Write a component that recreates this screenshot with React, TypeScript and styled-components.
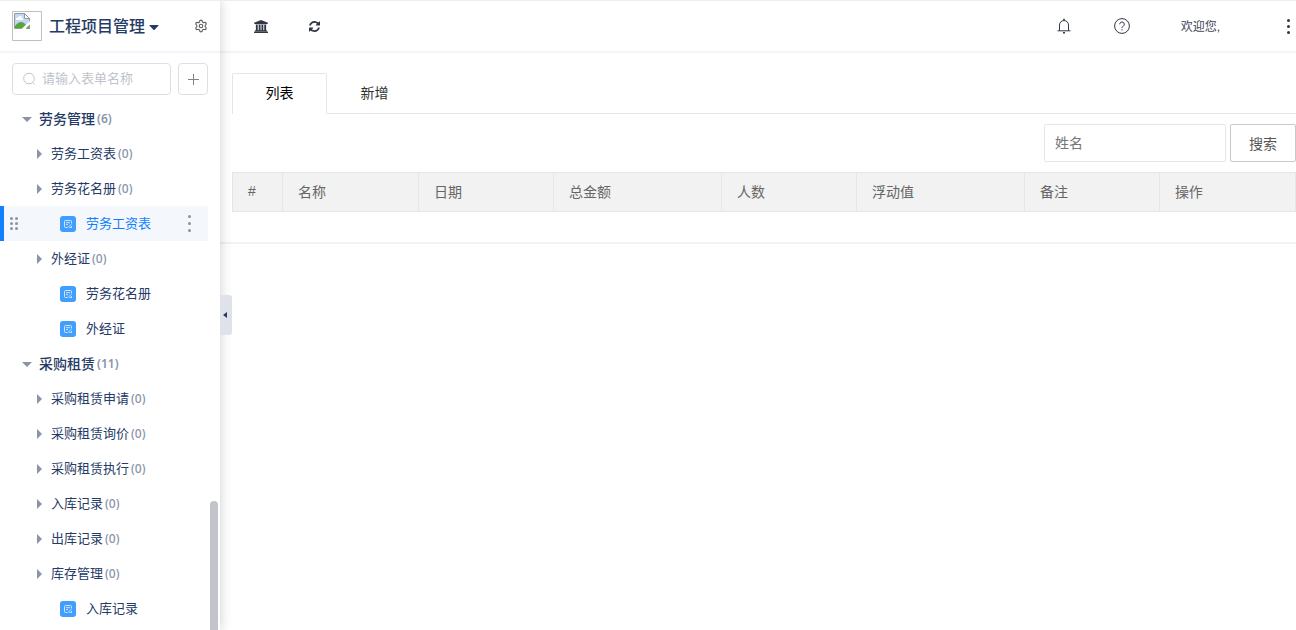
import React from "react";
import styled, { createGlobalStyle, css } from "styled-components";
import { Settings } from "lucide-react";

const Global = createGlobalStyle`
  *, *::before, *::after { box-sizing: border-box; }
  body {
    margin: 0;
    background: #fff;
    color: #263a66;
    font-family: "Liberation Sans", "Noto Sans CJK SC", sans-serif;
    font-size: 14px;
  }
  button, input { font: inherit; color: inherit; }
  button { background: none; border: 0; padding: 0; cursor: pointer; }
  svg { display: block; flex: none; }
`;

const Shell = styled.div`
  display: flex;
  height: 100vh;
  overflow: hidden;
  border-top: 1px solid #ededed;
`;

const Sidebar = styled.aside`
  position: relative;
  z-index: 1;
  flex: none;
  width: 220px;
  background: #fff;
  box-shadow: 0 0 12px rgba(0, 0, 0, 0.2);
`;

const SideHeader = styled.header`
  display: flex;
  align-items: center;
  height: 52px;
  padding: 0 12px;
  border-bottom: 2px solid #f4f5fa;
`;

const AppSwitch = styled.button`
  display: flex;
  align-items: center;
  gap: 4px;
  margin-left: 7px;
  padding-top: 2px;
  font-size: 16px;
  font-weight: 500;
  line-height: 24px;
`;

const GearButton = styled.button`
  margin-left: auto;
  color: #606266;
`;

const SearchRow = styled.form`
  display: flex;
  gap: 7px;
  padding: 10px 12px 6px;
`;

const SearchBox = styled.label`
  display: flex;
  flex: 1;
  align-items: center;
  gap: 6px;
  min-width: 0;
  height: 32px;
  padding: 0 9px;
  border: 1px solid #dcdfe6;
  border-radius: 4px;
  color: #c0c4cc;
`;

const SearchInput = styled.input`
  flex: 1;
  min-width: 0;
  padding: 0 0 2px;
  border: 0;
  outline: 0;
  background: none;
  font-size: 13px;
  &::placeholder { color: #c0c4cc; }
`;

const AddButton = styled.button`
  display: grid;
  place-items: center;
  width: 30px;
  height: 32px;
  border: 1px solid #dcdfe6;
  border-radius: 4px;
  color: #808286;
`;

const Tree = styled.ul`
  margin: 0;
  padding: 0 12px 0 0;
  list-style: none;
`;

type Kind = "group" | "folder" | "form";
const indent: Record<Kind, number> = { group: 18, folder: 32, form: 56 };

const TreeRow = styled.li<{ $kind: Kind; $active?: boolean }>`
  position: relative;
  display: flex;
  align-items: center;
  height: 35px;
  padding-left: ${(p) => indent[p.$kind]}px;
  border-left: 4px solid transparent;
  ${(p) => p.$active && css`
    border-left-color: #127fff;
    background: #f4f7fc;
  `}
`;

const NodeButton = styled.button<{ $kind: Kind; $active?: boolean }>`
  display: flex;
  align-items: center;
  font-size: ${(p) => (p.$kind === "group" ? 14 : 13)}px;
  font-weight: ${(p) => (p.$kind === "group" ? 500 : 400)};
  color: ${(p) => (p.$active ? "#127fff" : "#263a66")};
`;

const Label = styled.span`
  padding-bottom: 2px;
`;

const Arrow = styled.span<{ $open?: boolean }>`
  width: 0;
  height: 0;
  border: 5px solid transparent;
  ${(p) => p.$open
    ? css`border-top-color: #8993a9; border-bottom: 0; margin: 1px 7px 0 0;`
    : css`border-left-color: #8993a9; border-right: 0; margin: 0 9px 0 1px;`}
`;

const Count = styled.span<{ $strong?: boolean }>`
  margin-left: 2px;
  font-family: "Noto Sans", sans-serif;
  font-size: 12px;
  font-weight: ${(p) => (p.$strong ? 600 : 500)};
  color: #8993a9;
`;

const FormIcon = styled.span`
  display: grid;
  place-items: center;
  width: 16px;
  height: 16px;
  margin-right: 10px;
  border-radius: 3px;
  background: #409eff;
`;

const Grip = styled.span`
  position: absolute;
  left: 6px;
  color: #8993a9;
`;

const MoreButton = styled.button`
  margin-left: auto;
  margin-right: 17px;
  color: #8993a9;
`;

const ScrollThumb = styled.div`
  position: absolute;
  top: 500px;
  right: 2px;
  bottom: 0;
  width: 8px;
  border-radius: 4px 4px 0 0;
  background: #c1c4c9;
`;

const CollapseHandle = styled.button`
  position: absolute;
  top: calc(50% - 21px);
  left: 100%;
  display: grid;
  align-items: center;
  width: 12px;
  height: 40px;
  padding-left: 3px;
  border-radius: 0 3px 3px 0;
  background: #dfe2ea;
`;

const Main = styled.main`
  flex: 1;
  min-width: 0;
`;

const TopBar = styled.header`
  display: flex;
  align-items: center;
  justify-content: space-between;
  height: 52px;
  padding: 0 6px 0 34px;
  border-bottom: 2px solid #f4f5fa;
`;

const Tools = styled.div<{ $gap: number }>`
  display: flex;
  align-items: center;
  gap: ${(p) => p.$gap}px;
`;

const ToolButton = styled.button`
  display: grid;
  place-items: center;
  color: #303643;
`;

const Welcome = styled.span`
  margin: 0 24px 0 8px;
  padding-bottom: 2px;
  font-size: 12px;
  color: #404654;
`;

const Panel = styled.section`
  padding: 20px 0 30px 12px;
  border-bottom: 2px solid #f2f2f2;
`;

const TabBar = styled.div`
  display: flex;
  height: 41px;
  border-bottom: 1px solid #e6e6e6;
`;

const Tab = styled.button<{ $active?: boolean }>`
  width: 95px;
  height: 41px;
  padding-bottom: 4px;
  border: 1px solid transparent;
  border-radius: 2px 2px 0 0;
  color: #333;
  ${(p) => p.$active && css`
    border-color: #e6e6e6;
    border-bottom-color: #fff;
    color: #000;
  `}
`;

const FilterRow = styled.form`
  display: flex;
  justify-content: flex-end;
  gap: 4px;
  padding: 10px 0;
`;

const NameInput = styled.input`
  width: 182px;
  height: 38px;
  padding: 0 10px;
  border: 1px solid #e6e6e6;
  border-radius: 2px;
  outline: 0;
  &::placeholder { color: #757575; }
`;

const SearchButton = styled.button`
  width: 66px;
  height: 38px;
  border: 1px solid #c9c9c9;
  border-radius: 2px;
  background: #fff;
  color: #555;
`;

const DataTable = styled.table`
  width: 100%;
  table-layout: fixed;
  border-collapse: collapse;
`;

const HeadCell = styled.th<{ $width: string }>`
  width: ${(p) => p.$width};
  height: 39px;
  padding: 0 15px 2px;
  border: 1px solid #e6e6e6;
  background: #f2f2f2;
  color: #666;
  font-weight: 400;
  text-align: left;
`;

const Dots = ({ size = 3, gap = 7, cols = 1 }: { size?: number; gap?: number; cols?: number }) => {
  const h = gap * 2 + size;
  const w = (cols - 1) * gap + size;
  return (
    <svg width={w} height={h} viewBox={`0 0 ${w} ${h}`} fill="currentColor" aria-hidden="true">
      {Array.from({ length: cols }, (_, c) =>
        [0, 1, 2].map((r) => <circle key={`${c}-${r}`} cx={c * gap + size / 2} cy={r * gap + size / 2} r={size / 2} />)
      )}
    </svg>
  );
};

const BrokenImage = () => (
  <svg width="30" height="30" viewBox="0 0 30 30" role="img" aria-label="logo">
    <path d="M.5.5h29v29H.5z" fill="#fff" stroke="#c0c0c0" />
    <path d="M2.500 2.500h10l5 5v10h-15z" fill="#c3d6f8" stroke="#999" />
    <path d="M12.500 2.500v5h5z" fill="#fff" stroke="#999" />
    <path d="M4 8c0-2 2-2 2.500-1.500C7 4 10 4.500 10 7c1 0 1.500 1 1 2H4z" fill="#fff" />
    <path d="M3 17v-2c3-4 6-5 9-3l2 2-3 3z" fill="#57a63a" />
    <path d="M9 18.500l9.500-9v3.500l-5 5.500z" fill="#fff" />
    <path d="M14 17.500h3.500V14z" fill="#57a63a" stroke="#999" strokeWidth=".5" />
  </svg>
);

const Bank = () => (
  <svg width="14" height="13" viewBox="0 0 1920 1792" fill="currentColor" aria-hidden="true">
    <path d="M960 0l960 384v128h-128q0 26-20.500 45t-48.500 19h-1526q-28 0-48.500-19t-20.500-45h-128v-128zm-704 640h256v768h128v-768h256v768h128v-768h256v768h128v-768h256v768h59q28 0 48.500 19t20.500 45v64h-1664v-64q0-26 20.500-45t48.500-19h59v-768zm1595 960q28 0 48.500 19t20.500 45v128h-1920v-128q0-26 20.500-45t48.500-19h1782z" />
  </svg>
);

const Refresh = () => (
  <svg width="11" height="11" viewBox="0 0 1536 1536" fill="currentColor" aria-hidden="true">
    <path d="M1511 928q0 5-1 7-64 268-268 434.500t-478 166.500q-146 0-282.500-55t-243.500-157l-129 129q-19 19-45 19t-45-19-19-45v-448q0-26 19-45t45-19h448q26 0 45 19t19 45-19 45l-137 137q71 66 161 102t187 36q134 0 250-65t186-179q11-17 53-117 8-23 30-23h192q13 0 22.500 9.500t9.500 22.500zm25-800v448q0 26-19 45t-45 19h-448q-26 0-45-19t-19-45 19-45l138-138q-148-137-349-137-134 0-250 65t-186 179q-11 17-53 117-8 23-30 23h-199q-13 0-22.500-9.500t-9.500-22.500v-7q65-268 270-434.500t480-166.500q146 0 284 55.500t245 156.500l130-129q19-19 45-19t45 19 19 45z" />
  </svg>
);

const Bell = () => (
  <svg width="14" height="16" viewBox="0 0 14 16" fill="none" stroke="currentColor" aria-hidden="true">
    <path d="M2.500 12.500V7a4.500 4.500 0 0 1 9 0v5.500M.5 12.800h13" />
    <path d="M7 .8v1.700M6 14.700h2" strokeWidth="1.500" />
  </svg>
);

const Help = () => (
  <svg width="16" height="16" viewBox="0 0 16 16" fill="none" stroke="currentColor" aria-hidden="true">
    <circle cx="8" cy="8" r="7.400" />
    <path d="M5.700 6.300a2.300 2.300 0 1 1 3.600 1.900C8.300 8.800 8 9 8 10M8 11.200v1.200" />
  </svg>
);

const FormGlyph = () => (
  <svg width="8" height="8" viewBox="0 0 8 8" fill="none" stroke="#cfe6ff" aria-hidden="true">
    <path d="M3.500 7.500h-2a1 1 0 0 1-1-1v-5a1 1 0 0 1 1-1h5a1 1 0 0 1 1 1v2M2 2.700h4M2 4.700h2M4 7.500l3.300-3.300M5.500 7.500h2V6" />
  </svg>
);

interface Node { kind: Kind; label: string; count?: number; active?: boolean }
const nodes: Node[] = [
  { kind: "group", label: "劳务管理", count: 6 },
  { kind: "folder", label: "劳务工资表", count: 0 },
  { kind: "folder", label: "劳务花名册", count: 0 },
  { kind: "form", label: "劳务工资表", active: true },
  { kind: "folder", label: "外经证", count: 0 },
  { kind: "form", label: "劳务花名册" },
  { kind: "form", label: "外经证" },
  { kind: "group", label: "采购租赁", count: 11 },
  { kind: "folder", label: "采购租赁申请", count: 0 },
  { kind: "folder", label: "采购租赁询价", count: 0 },
  { kind: "folder", label: "采购租赁执行", count: 0 },
  { kind: "folder", label: "入库记录", count: 0 },
  { kind: "folder", label: "出库记录", count: 0 },
  { kind: "folder", label: "库存管理", count: 0 },
  { kind: "form", label: "入库记录" },
];

const columns = [
  { label: "#", width: "50px" },
  { label: "名称", width: "12.8%" },
  { label: "日期", width: "12.7%" },
  { label: "总金额", width: "15.8%" },
  { label: "人数", width: "12.7%" },
  { label: "浮动值", width: "15.8%" },
  { label: "备注", width: "12.7%" },
  { label: "操作", width: "12.8%" },
];

const TreeItem = ({ kind, label, count, active }: Node) => (
  <TreeRow $kind={kind} $active={active}>
    {active && <Grip><Dots gap={5} cols={2} /></Grip>}
    <NodeButton type="button" $kind={kind} $active={active}>
      {kind === "form" ? <FormIcon><FormGlyph /></FormIcon> : <Arrow $open={kind === "group"} />}
      <Label>{label}</Label>
      {count !== undefined && <Count $strong={kind === "group"}>({count})</Count>}
    </NodeButton>
    {active && <MoreButton type="button" aria-label="更多"><Dots /></MoreButton>}
  </TreeRow>
);

export default function App() {
  return (
    <Shell>
      <Global />
      <Sidebar>
        <SideHeader>
          <BrokenImage />
          <AppSwitch type="button">
            工程项目管理
            <svg width="10" height="5" viewBox="0 0 10 5" fill="currentColor" aria-hidden="true"><path d="M1 0h8q1 0 .4.8L5.600 4.700q-.6.500-1.200 0L.6.800Q0 0 1 0z" /></svg>
          </AppSwitch>
          <GearButton type="button" aria-label="设置"><Settings size={14} strokeWidth={2} /></GearButton>
        </SideHeader>
        <SearchRow onSubmit={(e) => e.preventDefault()}>
          <SearchBox>
            <svg width="14" height="14" viewBox="0 0 14 14" fill="none" stroke="currentColor" aria-hidden="true">
              <circle cx="7" cy="6.500" r="5.300" />
              <path d="M10.700 10.500l2 2" />
            </svg>
            <SearchInput placeholder="请输入表单名称" aria-label="请输入表单名称" />
          </SearchBox>
          <AddButton type="button" aria-label="新增表单">
            <svg width="11" height="11" viewBox="0 0 11 11" stroke="currentColor" aria-hidden="true"><path d="M5.500 0v11M0 5.500h11" /></svg>
          </AddButton>
        </SearchRow>
        <Tree>
          {nodes.map((n, i) => <TreeItem key={i} {...n} />)}
        </Tree>
        <ScrollThumb />
        <CollapseHandle type="button" aria-label="收起">
          <svg width="4" height="6" viewBox="0 0 4 6" fill="#263a66" aria-hidden="true"><path d="M4 0v6L0 3z" /></svg>
        </CollapseHandle>
      </Sidebar>
      <Main>
        <TopBar>
          <Tools $gap={41}>
            <ToolButton type="button" aria-label="首页"><Bank /></ToolButton>
            <ToolButton type="button" aria-label="刷新"><Refresh /></ToolButton>
          </Tools>
          <Tools $gap={43}>
            <ToolButton type="button" aria-label="通知"><Bell /></ToolButton>
            <ToolButton type="button" aria-label="帮助"><Help /></ToolButton>
            <Welcome>欢迎您,</Welcome>
            <ToolButton type="button" aria-label="更多"><Dots gap={6} /></ToolButton>
          </Tools>
        </TopBar>
        <Panel>
          <TabBar role="tablist">
            <Tab type="button" role="tab" aria-selected="true" $active>列表</Tab>
            <Tab type="button" role="tab" aria-selected="false">新增</Tab>
          </TabBar>
          <FilterRow onSubmit={(e) => e.preventDefault()}>
            <NameInput placeholder="姓名" aria-label="姓名" />
            <SearchButton type="submit">搜索</SearchButton>
          </FilterRow>
          <DataTable>
            <thead>
              <tr>{columns.map((c) => <HeadCell key={c.label} scope="col" $width={c.width}>{c.label}</HeadCell>)}</tr>
            </thead>
          </DataTable>
        </Panel>
      </Main>
    </Shell>
  );
}
